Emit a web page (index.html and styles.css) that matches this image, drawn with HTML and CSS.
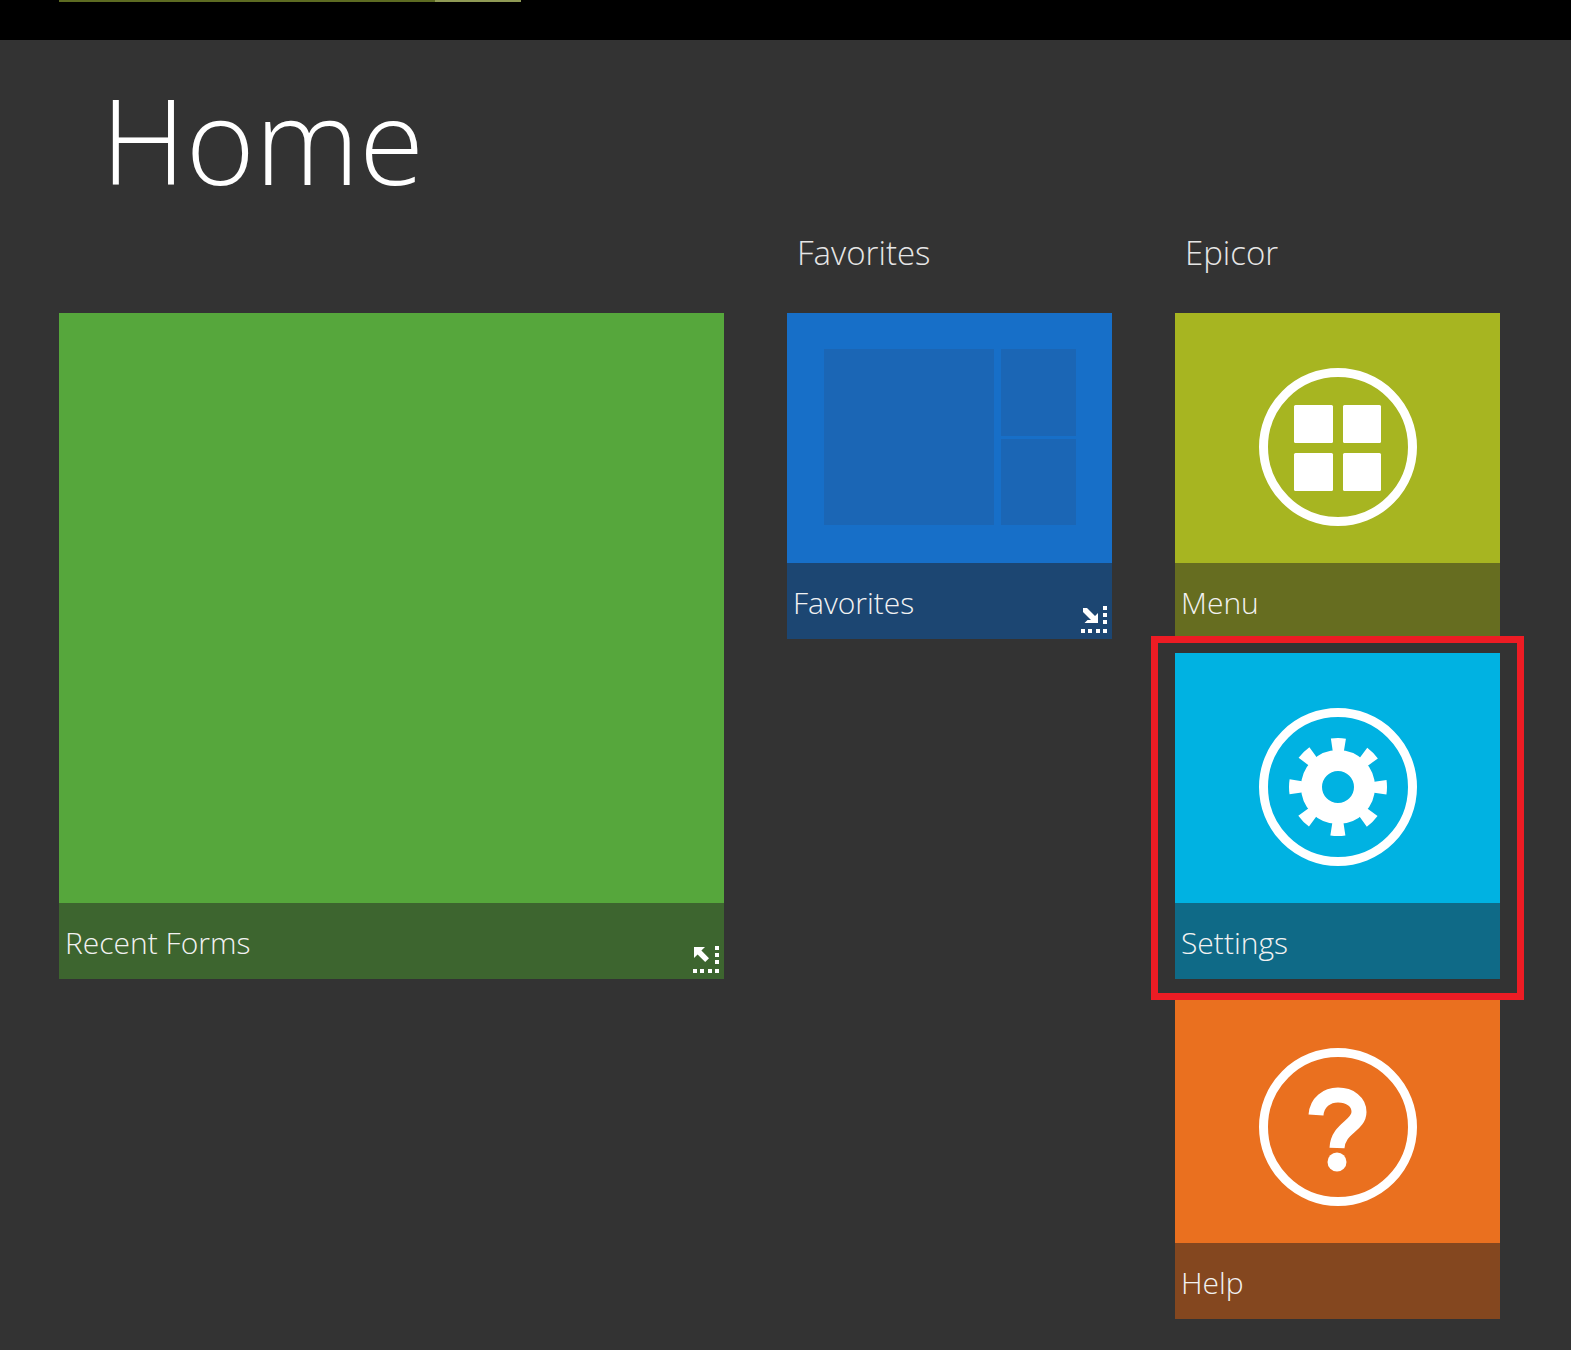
FILE: index.html
```html
<!DOCTYPE html>
<html lang="en">
<head>
  <meta charset="UTF-8">
  <title>Home</title>
  <link rel="stylesheet" href="styles.css">
</head>
<body>
  <div class="topbar">
    <div class="strip">
      <div class="strip-dark"></div>
      <div class="strip-light"></div>
    </div>
  </div>
  <h1 class="page-title">Home</h1>
  <div class="groups">
    <div class="group">
      <div class="group-title"></div>
      <div class="tile tile-large tile-green">
        <div class="tile-image"></div>
        <div class="tile-label">Recent Forms</div>
        <svg class="resize-icon" viewBox="0 0 28 28">
          <g fill="#fff">
            <path d="M2 2h11l-3.6 3.6L17 13.2 13.2 17 5.6 9.400 2 13z"/>
            <rect x="23" y="1" width="4" height="4"/>
            <rect x="23" y="8" width="4" height="4"/>
            <rect x="23" y="15" width="4" height="4"/>
            <rect x="1" y="24" width="4" height="4"/>
            <rect x="8" y="24" width="4" height="4"/>
            <rect x="16" y="24" width="4" height="4"/>
            <rect x="23" y="24" width="4" height="4"/>
          </g>
        </svg>
      </div>
    </div>
    <div class="group">
      <div class="group-title">Favorites</div>
      <div class="tile tile-blue">
        <div class="tile-image">
          <div class="panes">
            <div class="pane-big"></div>
            <div class="pane-side">
              <div class="pane-small"></div>
              <div class="pane-small"></div>
            </div>
          </div>
        </div>
        <div class="tile-label">Favorites</div>
        <svg class="resize-icon" viewBox="0 0 28 28">
          <g fill="#fff">
            <path d="M3 3h4l8 8 3-3v10H4.500l3-3 3.500-.1L3 7z"/>
            <rect x="23" y="1" width="4" height="4"/>
            <rect x="23" y="8" width="4" height="4"/>
            <rect x="23" y="15" width="4" height="4"/>
            <rect x="1" y="24" width="4" height="4"/>
            <rect x="8" y="24" width="4" height="4"/>
            <rect x="16" y="24" width="4" height="4"/>
            <rect x="23" y="24" width="4" height="4"/>
          </g>
        </svg>
      </div>
    </div>
    <div class="group">
      <div class="group-title">Epicor</div>
      <div class="tile-stack">
        <div class="tile tile-olive">
          <div class="tile-image">
            <svg class="tile-icon" viewBox="0 0 170 170">
              <circle cx="85" cy="85" r="74.500" fill="none" stroke="#fff" stroke-width="9"/>
              <g fill="#fff">
                <rect x="41" y="43" width="39" height="38" rx="1.500"/>
                <rect x="90" y="43" width="38" height="38" rx="1.500"/>
                <rect x="41" y="91" width="39" height="38" rx="1.500"/>
                <rect x="90" y="91" width="38" height="38" rx="1.500"/>
              </g>
            </svg>
          </div>
          <div class="tile-label">Menu</div>
        </div>
        <div class="tile tile-cyan tile-marked">
          <div class="tile-image">
            <svg class="tile-icon" viewBox="0 0 170 170">
              <circle cx="85" cy="85" r="74.500" fill="none" stroke="#fff" stroke-width="9"/>
              <circle cx="85" cy="85" r="26.500" fill="none" stroke="#fff" stroke-width="21"/>
              <circle cx="85" cy="85" r="42" fill="none" stroke="#fff" stroke-width="14" stroke-dasharray="13 19.990" stroke-dashoffset="6.500"/>
            </svg>
          </div>
          <div class="tile-label">Settings</div>
        </div>
        <div class="tile tile-orange">
          <div class="tile-image">
            <svg class="tile-icon" viewBox="0 0 170 170">
              <circle cx="85" cy="85" r="74.500" fill="none" stroke="#fff" stroke-width="9"/>
              <path d="M63 73C64 60 74 53 85 53C97 53 106 60 106 70C106 84 85 86 84 106" fill="none" stroke="#fff" stroke-width="15"/>
              <circle cx="84" cy="120" r="9.500" fill="#fff"/>
            </svg>
          </div>
          <div class="tile-label">Help</div>
        </div>
      </div>
    </div>
  </div>
</body>
</html>
```

FILE: styles.css
```css
html, body { margin: 0; padding: 0; }
body { background: #333; color: #fff; font-family: "Open Sans", "Noto Sans", sans-serif; height: 1350px; overflow: hidden; }

.topbar { background: #000; height: 40px; }
.strip { display: flex; height: 2px; margin-left: 59px; width: 462px; }
.strip-dark { background: #5d6b22; flex: 1; }
.strip-light { background: #8f9a55; width: 86px; }

.page-title { margin: 25px 0 0 101px; font-size: 118px; font-weight: 300; line-height: 150px; height: 150px; }

.groups { display: flex; gap: 63px; margin: 0 0 0 59px; }
.group-title { height: 98px; margin: 0; padding-left: 10px; box-sizing: border-box; font-size: 33px; font-weight: 300; line-height: 76px; color: #e6e6e6; }
.group-title:empty { height: 98px; }

.tile-stack { display: flex; flex-direction: column; gap: 14px; }
.tile { position: relative; width: 325px; height: 326px; display: flex; flex-direction: column; }
.tile-large { width: 665px; height: 666px; }
.tile-image { flex: 1; display: flex; align-items: center; justify-content: center; padding-top: 18px; box-sizing: border-box; }
.tile-label { height: 76px; padding-left: 6px; font-size: 30px; font-weight: 300; line-height: 80px; color: #f2f2f2; }
.tile-icon { width: 170px; height: 170px; display: block; }
.resize-icon { position: absolute; right: 4px; bottom: 6px; width: 28px; height: 28px; }

.tile-green .tile-image { background: #56a73c; }
.tile-green .tile-label { background: #3d652f; }
.tile-blue .tile-image { background: #176fc8; }
.tile-blue .tile-label { background: #1c4672; }
.tile-olive .tile-image { background: #a7b521; }
.tile-olive .tile-label { background: #666d20; }
.tile-cyan .tile-image { background: #00b2e2; }
.tile-cyan .tile-label { background: #0f6a87; }
.tile-orange .tile-image { background: #ea701f; }
.tile-orange .tile-label { background: #84471f; }

.panes { display: flex; gap: 7px; width: 252px; height: 176px; margin-top: -20px; }
.pane-big { width: 170px; background: #1b66b5; }
.pane-side { flex: 1; display: flex; flex-direction: column; gap: 3px; }
.pane-small { flex: 1; background: #1b66b5; }

.tile-marked::after { content: ""; position: absolute; left: -24px; right: -24px; top: -17px; bottom: -21px; border: 7px solid #ed1c24; z-index: 1; }
```
